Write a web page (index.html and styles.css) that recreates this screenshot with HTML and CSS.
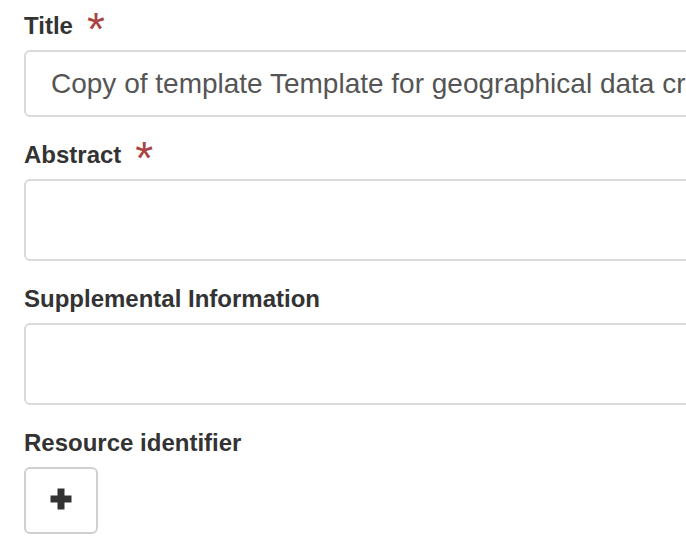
FILE: index.html
```html
<!DOCTYPE html>
<html lang="en">
<head>
<meta charset="utf-8">
<title>Metadata editor</title>
<link rel="stylesheet" href="styles.css">
</head>
<body>
<form class="editor">
  <div class="form-group">
    <label class="field-label" for="title">Title<span class="required">*</span></label>
    <input class="form-control" id="title" type="text" value="Copy of template Template for geographical data created with the editor">
  </div>
  <div class="form-group">
    <label class="field-label" for="abstract">Abstract<span class="required">*</span></label>
    <textarea class="form-control area" id="abstract"></textarea>
  </div>
  <div class="form-group">
    <label class="field-label" for="supp">Supplemental Information</label>
    <textarea class="form-control area" id="supp"></textarea>
  </div>
  <div class="form-group">
    <label class="field-label">Resource identifier</label>
    <button type="button" class="btn-add" aria-label="Add">
      <svg width="22" height="22" viewBox="0 0 22 22" aria-hidden="true">
        <path d="M7.5 0.5h7v7h7v7h-7v7h-7v-7h-7v-7h7z" fill="#333"/>
      </svg>
    </button>
  </div>
</form>
</body>
</html>
```

FILE: styles.css
```css
html, body {
  margin: 0;
  padding: 0;
  overflow: hidden;
  background: #fff;
}

body {
  font-family: "Liberation Sans", Arial, sans-serif;
  color: #333;
}

.editor {
  width: 1000px;
  padding: 9px 0 0 24px;
}

.form-group {
  display: flex;
  flex-direction: column;
  align-items: flex-start;
  margin-bottom: 21px;
}

.field-label {
  display: block;
  font-size: 24px;
  font-weight: bold;
  line-height: 34px;
  margin-bottom: 7px;
  color: #333;
}

.required {
  font-weight: normal;
  font-size: 46px;
  line-height: 0;
  color: #a94442;
  margin-left: 14px;
  vertical-align: -11px;
}

.form-control {
  box-sizing: border-box;
  width: 100%;
  height: 67px;
  margin: 0;
  padding: 0 25px;
  border: 2px solid #dadada;
  border-radius: 6px;
  background: #fff;
  font-family: "Liberation Sans", Arial, sans-serif;
  font-size: 28px;
  color: #555;
  outline: none;
}

.area {
  height: 82px;
  resize: none;
  padding: 10px 25px;
}

.btn-add {
  box-sizing: border-box;
  width: 74px;
  height: 67px;
  margin: 0;
  padding: 0 0 4px 0;
  border: 2px solid #d0d0d0;
  border-radius: 6px;
  background: #fff;
  display: flex;
  align-items: center;
  justify-content: center;
}
```
